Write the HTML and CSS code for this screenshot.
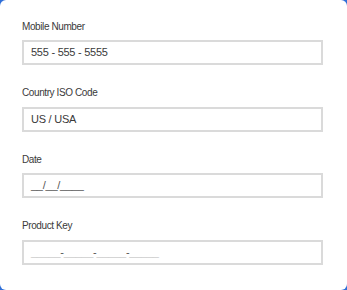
FILE: index.html
```html
<!DOCTYPE html>
<html lang="en">
<head>
  <meta charset="UTF-8" />
  <title>Masked Inputs</title>
  <link rel="stylesheet" href="styles.css">
</head>
<body>
  <div class="card">
    <div class="field">
      <label>Mobile Number</label>
      <div class="input">555 - 555 - 5555</div>
    </div>
    <div class="field">
      <label>Country ISO Code</label>
      <div class="input">US / USA</div>
    </div>
    <div class="field">
      <label>Date</label>
      <div class="input mask">__/__/____</div>
    </div>
    <div class="field">
      <label>Product Key</label>
      <div class="input mask"><span class="blank">_____</span>-<span class="blank">_____</span>-<span class="blank">_____</span>-<span class="blank">_____</span></div>
    </div>
  </div>
</body>
</html>
```

FILE: styles.css
```css
/* ===== Reset ===== */
*, *::before, *::after { margin:0; padding:0; box-sizing:border-box; }
body {
  font-family:'Liberation Sans', Arial, sans-serif;
  background:#2f6fd8; color:#333;
  width:347px; height:290px; overflow:hidden;
}

/* ===== Card ===== */
.card {
  background:#fff; border-radius:6px;
  width:347px; height:290px;
  padding:19.5px 24px 0 22px;
  display:flex; flex-direction:column; gap:21px;
}
.field { display:flex; flex-direction:column; gap:6.5px; }
.field label { font-size:10px; line-height:14px; letter-spacing:-0.4px; color:#3a3a3a; }
.input {
  height:25px; border:2px solid #dadada;
  padding:0 0 0 7px;
  font-size:11px; line-height:21px; letter-spacing:-0.25px; color:#3a3a3a;
}
.mask { color:#555; }
.blank { color:#ccc; }
```
